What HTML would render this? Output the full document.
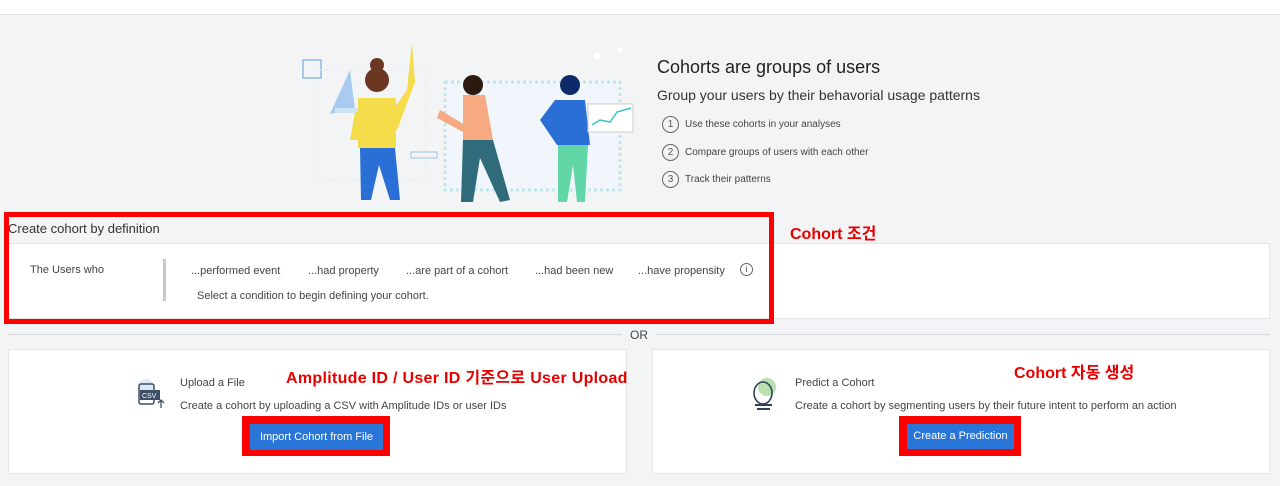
<!DOCTYPE html>
<html><head><meta charset="utf-8"><style>
*{margin:0;padding:0;box-sizing:border-box}
body{width:1280px;height:486px;background:#f3f4f6;font-family:"Liberation Sans","Noto Sans CJK KR",sans-serif;position:relative;overflow:hidden;color:#333}
.a{position:absolute}
.t{font-size:11px;color:#444;white-space:nowrap}
.red{color:#e60000;font-weight:bold;font-size:16px;white-space:nowrap}
.circ{width:17px;height:17px;border:1px solid #666;border-radius:50%;font-size:10px;text-align:center;line-height:15px;color:#555}
</style></head><body>
<div class="a" style="left:0;top:0;width:1280px;height:15px;background:#fff;border-bottom:1px solid #e2e4e8"></div>

<svg class="a" style="left:295px;top:40px" width="340" height="165">
<rect x="8" y="20" width="18" height="18" fill="none" stroke="#8fb8e8" stroke-width="1.5"/>
<rect x="20" y="30" width="110" height="110" fill="none" stroke="#e6e9ee" stroke-dasharray="2 3"/>
<rect x="150" y="42" width="175" height="108" fill="#f0f6fb" stroke="#bfe7ec" stroke-width="3" stroke-dasharray="3 3"/>
<polygon points="55,30 60,70 35,74" fill="#a9cbef"/><rect x="40" y="68" width="30" height="5" fill="#cfe3f7"/>
<rect x="116" y="112" width="26" height="6" fill="none" stroke="#9ec3ea"/>
<circle cx="302" cy="16" r="3" fill="#fff"/><circle cx="325" cy="10" r="3" fill="#fff"/>
<path d="M117 2 L112 50 L98 70 L60 72 L55 100 L75 100 L102 90 L120 42Z" fill="#f5dc4a"/>
<rect x="63" y="58" width="38" height="50" fill="#f5dc4a"/>
<circle cx="82" cy="40" r="12" fill="#6b3722"/><circle cx="82" cy="25" r="7" fill="#6b3722"/>
<path d="M65 108 L100 108 L105 160 L95 160 L84 125 L76 160 L66 160Z" fill="#2a6fd6"/>
<circle cx="178" cy="45" r="10" fill="#2b1a10"/>
<path d="M168 55 L190 55 L198 100 L168 102Z" fill="#f7a982"/>
<path d="M145 70 L170 85 L168 92 L142 78Z" fill="#f7a982"/>
<path d="M168 100 L198 100 L215 160 L205 162 L185 118 L178 162 L166 162Z" fill="#2f6b7a"/>
<circle cx="275" cy="45" r="10" fill="#0f2a6b"/>
<path d="M260 60 L290 60 L295 105 L262 105 L245 80Z" fill="#2a6fd6"/>
<rect x="293" y="64" width="45" height="28" fill="#fff" stroke="#ccc"/>
<polyline points="297,85 305,80 315,82 322,72 336,68" fill="none" stroke="#38c4c4" stroke-width="1.5"/>
<path d="M263 105 L293 105 L290 162 L282 162 L278 125 L272 162 L263 162Z" fill="#62d6a6"/>
</svg>

<div class="a" style="left:657px;top:57px;font-size:18px;color:#222">Cohorts are groups of users</div>
<div class="a" style="left:657px;top:87px;font-size:14px;color:#333">Group your users by their behavorial usage patterns</div>
<div class="a circ" style="left:662px;top:116px">1</div><div class="a t" style="left:685px;top:119px;font-size:10px">Use these cohorts in your analyses</div>
<div class="a circ" style="left:662px;top:144px">2</div><div class="a t" style="left:685px;top:147px;font-size:10px">Compare groups of users with each other</div>
<div class="a circ" style="left:662px;top:171px">3</div><div class="a t" style="left:685px;top:174px;font-size:10px">Track their patterns</div>

<div class="a" style="left:8px;top:243px;width:1262px;height:76px;background:#fff;border:1px solid #e3e5e9"></div>
<div class="a" style="left:8px;top:221px;font-size:13px;color:#333">Create cohort by definition</div>
<div class="a t" style="left:30px;top:264px">The Users who</div>
<div class="a" style="left:163px;top:259px;width:3px;height:42px;background:#c8c9cf"></div>
<div class="a t" style="left:191px;top:265px">...performed event</div>
<div class="a t" style="left:308px;top:265px">...had property</div>
<div class="a t" style="left:406px;top:265px">...are part of a cohort</div>
<div class="a t" style="left:535px;top:265px">...had been new</div>
<div class="a t" style="left:638px;top:265px">...have propensity</div>
<div class="a circ" style="left:740px;top:263px;width:13px;height:13px;line-height:11px;font-size:9px">i</div>
<div class="a t" style="left:197px;top:290px">Select a condition to begin defining your cohort.</div>
<div class="a" style="left:4px;top:212px;width:770px;height:112px;border:5px solid #f00"></div>
<div class="a red" style="left:790px;top:220px">Cohort 조건</div>

<div class="a" style="left:8px;top:334px;width:614px;height:1px;background:#d6d8dc"></div>
<div class="a" style="left:656px;top:334px;width:614px;height:1px;background:#d6d8dc"></div>
<div class="a t" style="left:630px;top:328px;font-size:12px">OR</div>

<div class="a" style="left:8px;top:349px;width:619px;height:125px;background:#fff;border:1px solid #e3e5e9"></div>
<div class="a" style="left:652px;top:349px;width:618px;height:125px;background:#fff;border:1px solid #e3e5e9"></div>

<svg class="a" style="left:134px;top:378px" width="34" height="32"><circle cx="12" cy="9" r="8" fill="#dde8f7"/><rect x="5" y="6" width="15" height="20" rx="2" fill="none" stroke="#3d4f66" stroke-width="1.5"/><rect x="6" y="12" width="20" height="10" fill="#3d4f66"/><text x="8" y="20" font-size="7" fill="#fff" font-family="Liberation Sans">CSV</text><path d="M27 30 V22 M24 25 L27 22 L30 25" stroke="#3d4f66" fill="none" stroke-width="1.3"/></svg>
<div class="a t" style="left:180px;top:377px">Upload a File</div>
<div class="a t" style="left:180px;top:400px">Create a cohort by uploading a CSV with Amplitude IDs or user IDs</div>
<div class="a" style="left:242px;top:416px;width:148px;height:40px;background:#f00"></div>
<div class="a" style="left:250px;top:424px;width:133px;height:26px;background:#2a76d8;color:#fff;font-size:11px;text-align:center;line-height:26px">Import Cohort from File</div>
<div class="a red" style="left:286px;top:364px;letter-spacing:0.3px">Amplitude ID / User ID 기준으로 User Upload</div>

<svg class="a" style="left:748px;top:376px" width="34" height="34"><circle cx="19" cy="11" r="9" fill="#b8e0b0"/><ellipse cx="15" cy="17" rx="9" ry="11" fill="none" stroke="#2f4157" stroke-width="1.6"/><rect x="7" y="28" width="17" height="2" fill="#2f4157"/><rect x="9" y="32" width="13" height="2" fill="#2f4157"/></svg>
<div class="a t" style="left:795px;top:377px">Predict a Cohort</div>
<div class="a t" style="left:795px;top:400px">Create a cohort by segmenting users by their future intent to perform an action</div>
<div class="a" style="left:899px;top:416px;width:122px;height:40px;background:#f00"></div>
<div class="a" style="left:907px;top:424px;width:107px;height:25px;background:#2a76d8;color:#fff;font-size:11px;text-align:center;line-height:25px">Create a Prediction</div>
<div class="a red" style="left:1014px;top:359px">Cohort 자동 생성</div>
</body></html>
